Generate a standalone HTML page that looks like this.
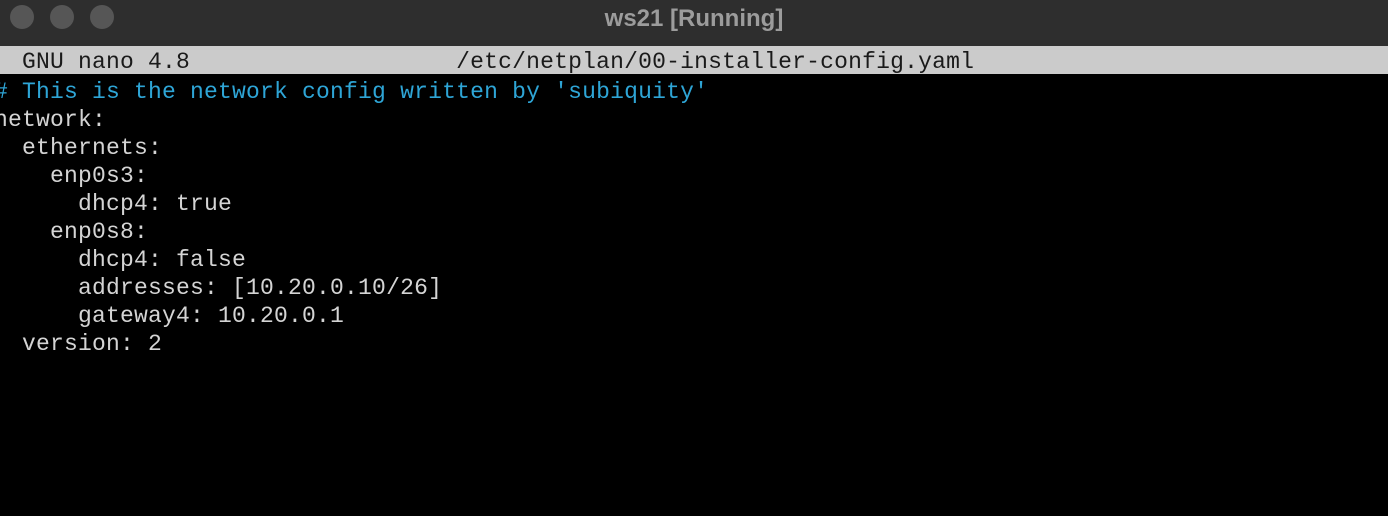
<!DOCTYPE html>
<html><head><style>
html,body{margin:0;padding:0;background:#000;width:1388px;height:516px;overflow:hidden}
.tb{position:absolute;left:0;top:0;width:1388px;height:46px;background:#2e2e2e}
.c{position:absolute;top:5px;width:24px;height:24px;border-radius:50%;background:#565656}
.title{position:absolute;left:0;width:1388px;top:5px;text-align:center;font:bold 24px "Liberation Sans",sans-serif;color:#9c9c9c}
.hd{position:absolute;left:0;top:46px;width:1388px;height:28px;background:#cbcbcb}
pre{position:absolute;margin:0;font-family:"Liberation Mono",monospace;font-size:23px;letter-spacing:0.2px;line-height:28px;white-space:pre}
.h{left:-6px;top:48px;color:#1a1a1a}
.b{left:-6px;top:78px;color:#d4d4d4}
.cy{color:#2ea5d6}
</style></head><body>
<div class="tb"><div class="c" style="left:10px"></div><div class="c" style="left:50px"></div><div class="c" style="left:90px"></div>
<div class="title">ws21 [Running]</div></div>
<div class="hd"></div>
<pre class="h">  GNU nano 4.8                   /etc/netplan/00-installer-config.yaml</pre>
<pre class="b"><span class="cy"># This is the network config written by 'subiquity'</span>
network:
  ethernets:
    enp0s3:
      dhcp4: true
    enp0s8:
      dhcp4: false
      addresses: [10.20.0.10/26]
      gateway4: 10.20.0.1
  version: 2</pre>
</body></html>
